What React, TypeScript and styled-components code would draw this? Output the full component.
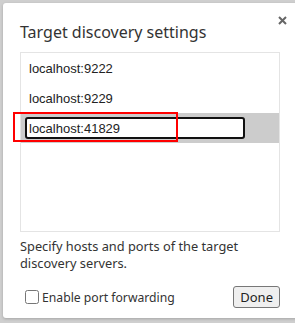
import React, { ReactElement, useState } from 'react';
import styled, { createGlobalStyle } from 'styled-components';

const GlobalStyle = createGlobalStyle`
  html, body {
    margin: 0;
    padding: 0;
    background: #cfcfcf;
    overflow: hidden;
  }
  body {
    font-family: 'Noto Sans', 'Open Sans', sans-serif;
  }
`;

const Backdrop = styled.div`
  width: 295px;
  height: 323px;
  padding: 3px 0 0 3px;
  box-sizing: border-box;
  overflow: hidden;
`;

const Dialog = styled.div`
  position: relative;
  width: 300px;
  height: 315px;
  background: #fff;
  border-radius: 3px;
  box-shadow: 0 1px 3px rgba(0, 0, 0, 0.2);
  padding: 19px 20px 0 17px;
  box-sizing: border-box;
  display: flex;
  flex-direction: column;
`;

const CloseButton = styled.button`
  position: absolute;
  top: 10px;
  right: 14px;
  width: 14px;
  height: 14px;
  padding: 0;
  border: none;
  background: transparent;
  display: flex;
  align-items: center;
  justify-content: center;
  cursor: pointer;
`;

const Title = styled.h1`
  margin: 0;
  font-size: 16px;
  line-height: 20px;
  font-weight: 400;
  color: #333;
`;

const List = styled.div`
  margin-top: 10px;
  width: 260px;
  height: 180px;
  border: 1px solid #e4e4e4;
  box-sizing: border-box;
  display: flex;
  flex-direction: column;
`;

const Row = styled.div<{ $selected?: boolean }>`
  height: 30px;
  flex: none;
  display: flex;
  align-items: center;
  padding-left: ${(p) => (p.$selected ? '4px' : '8px')};
  background: ${(p) => (p.$selected ? '#cccccc' : 'transparent')};
  font-family: 'Liberation Sans', Arial, sans-serif;
  font-size: 13px;
  color: #222;
`;

const EditField = styled.input`
  width: 220px;
  height: 22px;
  box-sizing: border-box;
  border: 2px solid #111;
  border-radius: 3px;
  padding: 0 2px;
  outline: none;
  background: #fff;
  font-family: 'Liberation Sans', Arial, sans-serif;
  font-size: 13px;
  color: #222;
`;

// red annotation box drawn over the edited row
const Highlight = styled.div`
  position: absolute;
  left: 10px;
  top: 109px;
  width: 165px;
  height: 30px;
  border: 2px solid #f00;
  box-sizing: border-box;
  pointer-events: none;
`;

const Note = styled.p`
  margin: 6px 0 0;
  font-size: 12.8px;
  line-height: 17px;
  color: #333;
`;

const Footer = styled.div`
  margin-top: 14px;
  display: flex;
  align-items: center;
  justify-content: space-between;
  width: 260px;
`;

const CheckLabel = styled.label`
  display: flex;
  align-items: center;
  gap: 3px;
  font-size: 12.2px;
  color: #333;
  margin-left: 5px;
`;

const Check = styled.input`
  width: 14px;
  height: 14px;
  margin: 0;
`;

const DoneButton = styled.button`
  height: 22px;
  padding: 0 6px;
  border: 1px solid #777;
  border-radius: 3px;
  background: #efefef;
  font-family: 'Noto Sans', 'Open Sans', sans-serif;
  font-size: 13px;
  color: #222;
`;

const hosts = ['localhost:9222', 'localhost:9229'];

function App(): ReactElement {
  const [editing, setEditing] = useState('localhost:41829');
  const [forwarding, setForwarding] = useState(false);

  return (
    <Backdrop>
      <GlobalStyle />
      <Dialog>
        <CloseButton aria-label="Close">
          <svg width="9" height="9" viewBox="0 0 9 9">
            <path d="M1 1L8 8M8 1L1 8" stroke="#666" strokeWidth="2" />
          </svg>
        </CloseButton>
        <Title>Target discovery settings</Title>
        <List>
          {hosts.map((h) => (
            <Row key={h}>{h}</Row>
          ))}
          <Row $selected>
            <EditField value={editing} onChange={(e) => setEditing(e.target.value)} />
          </Row>
        </List>
        <Note>
          Specify hosts and ports of the target
          <br />
          discovery servers.
        </Note>
        <Footer>
          <CheckLabel>
            <Check
              type="checkbox"
              checked={forwarding}
              onChange={(e) => setForwarding(e.target.checked)}
            />
            Enable port forwarding
          </CheckLabel>
          <DoneButton>Done</DoneButton>
        </Footer>
        <Highlight />
      </Dialog>
    </Backdrop>
  );
}

export default App;
